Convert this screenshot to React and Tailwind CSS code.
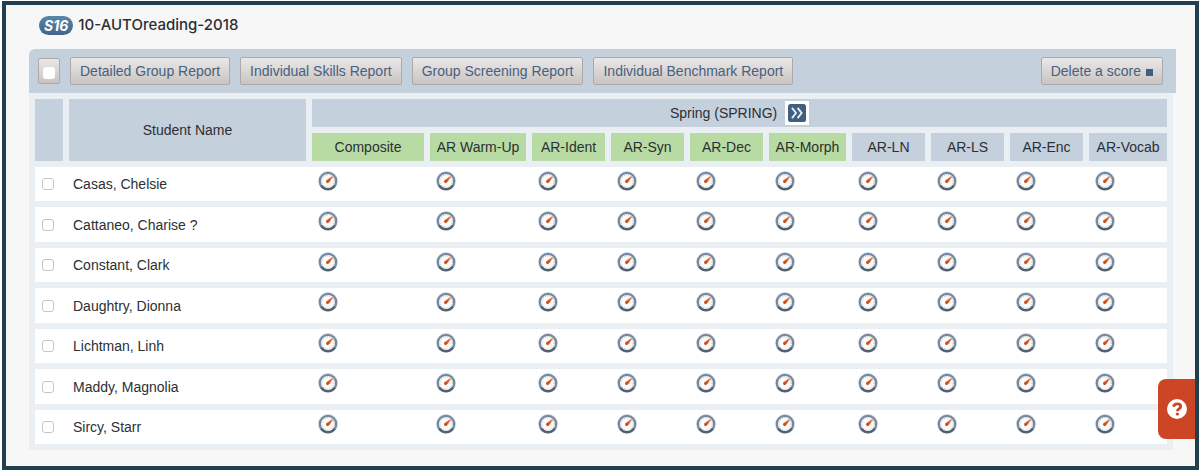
import clsx from "clsx";

const students = [
  "Casas, Chelsie",
  "Cattaneo, Charise ?",
  "Constant, Clark",
  "Daughtry, Dionna",
  "Lichtman, Linh",
  "Maddy, Magnolia",
  "Sircy, Starr",
];

const measures = [
  { name: "Composite", green: true },
  { name: "AR Warm-Up", green: true },
  { name: "AR-Ident", green: true },
  { name: "AR-Syn", green: true },
  { name: "AR-Dec", green: true },
  { name: "AR-Morph", green: true },
  { name: "AR-LN" },
  { name: "AR-LS" },
  { name: "AR-Enc" },
  { name: "AR-Vocab" },
];

const reports = [
  "Detailed Group Report",
  "Individual Skills Report",
  "Group Screening Report",
  "Individual Benchmark Report",
];

function Checkbox({ label, className }) {
  return (
    <input
      type="checkbox"
      aria-label={label}
      className={clsx("block size-3 appearance-none rounded-[3px] bg-white checked:bg-[#44658a]", className)}
    />
  );
}

function ToolbarButton({ children }) {
  return (
    <button
      type="button"
      className="h-7 whitespace-nowrap rounded-xs border border-[#aaa9ab] bg-linear-to-b from-[#eae8e7] to-[#c9c4c2] px-[9px] text-sm text-[#48607f]"
    >
      {children}
    </button>
  );
}

function Gauge() {
  return (
    <svg viewBox="0 0 20 20" className="block size-5" aria-hidden="true">
      <circle cx="10" cy="10" r="10" fill="#d3dfe9" />
      <circle cx="10" cy="10" r="8.2" fill="#fdfbf8" stroke="#7489a0" strokeWidth="2.2" />
      <path d="M3.2 14.6A8.2 8.2 0 0 0 16.8 14.6" fill="none" stroke="#52606e" strokeWidth="2.2" />
      <circle cx="10" cy="10" r="6.2" fill="none" stroke="#bcc3c9" strokeWidth="1.2" strokeDasharray="0.9 1.4" />
      <path d="M8.2 9.2 14.8 4.6 15 6.2 12 10.6 9 12.4Z" fill="#eba583" />
      <path d="M8.6 9.4 14 5.8 11.6 10.4 9 12Z" fill="#d4592a" />
      <circle cx="9.6" cy="10.6" r="1.4" fill="#c9481f" />
    </svg>
  );
}

export default function App() {
  return (
    <div className="flex min-h-screen bg-white pl-0.5 pr-px pt-px font-['Liberation_Sans',Arial,sans-serif] text-[#2c2f33]">
      <main className="relative min-w-0 flex-1 border-4 border-[#213f4e] bg-[#f7f7f7] pb-4 pl-[23px] pr-[19px]">
        {/* Group title */}
        <div className="flex h-11 items-center gap-[5px] pb-1 pl-[10px] font-['Inter',sans-serif]">
          <span className="rounded-full bg-linear-to-b from-[#5587ab] to-[#42648a] px-[5px] text-sm font-bold italic leading-[19px] text-white">
            S16
          </span>
          <h1 className="text-[15px] font-medium">10-AUTOreading-2018</h1>
        </div>

        {/* Toolbar */}
        <div className="flex h-11 items-center gap-[10px] rounded-tl-md bg-[#c5d0dd] pl-[9px] pr-[13px]">
          <label className="flex h-[26px] w-[22px] items-end justify-center rounded-xs border border-[#aaa9ab] bg-linear-to-b from-[#eae8e7] to-[#c9c4c2] pb-1">
            <Checkbox label="Select all students" />
          </label>
          {reports.map((report) => (
            <ToolbarButton key={report}>{report}</ToolbarButton>
          ))}
          <div className="ml-auto">
            <ToolbarButton>
              <span className="flex items-center gap-[5px]">
                Delete a score
                <span className="mt-0.5 size-[7px] bg-[#3f5f80]" />
              </span>
            </ToolbarButton>
          </div>
        </div>

        {/* Scores */}
        <div className="mr-[3px] bg-[#e9eff2] px-[6px]">
          <table className="w-full table-fixed border-separate border-spacing-x-0 border-spacing-y-[6px] text-sm">
            <colgroup>
              <col className="w-[34px]" />
              <col className="w-[243px]" />
              <col className="w-[118px]" />
              <col className="w-[102px]" />
              <col className="w-[79px]" />
              <col className="w-[79px]" />
              <col className="w-[79px]" />
              <col className="w-[83px]" />
              <col className="w-[79px]" />
              <col className="w-[79px]" />
              <col className="w-[79px]" />
              <col className="w-[78px]" />
            </colgroup>
            <thead>
              <tr className="h-7">
                <td rowSpan={2} className="border-r-[6px] border-[#e9eff2] bg-[#c5d0dd]" />
                <th rowSpan={2} className="border-r-[6px] border-[#e9eff2] bg-[#c5d0dd] font-normal">
                  Student Name
                </th>
                <th colSpan={measures.length} className="bg-[#c5d0dd] font-normal">
                  <div className="flex items-center justify-center gap-2">
                    Spring (SPRING)
                    <button type="button" aria-label="Show more" className="bg-white p-[3px]">
                      <svg viewBox="0 0 18 18" className="block size-[18px]" aria-hidden="true">
                        <rect width="18" height="18" rx="2.5" fill="#3f5f80" />
                        <path
                          d="M4 3.8 8 9 4 14.2M9.6 3.8 13.6 9 9.6 14.2"
                          fill="none"
                          stroke="#e6eef5"
                          strokeWidth="1.9"
                        />
                      </svg>
                    </button>
                  </div>
                </th>
              </tr>
              <tr className="h-7">
                {measures.map((m) => (
                  <th
                    key={m.name}
                    className={clsx(
                      "whitespace-nowrap border-r-[6px] border-[#e9eff2] font-normal last:border-r-0",
                      m.green ? "bg-[#b7dba3]" : "bg-[#c5d0dd]"
                    )}
                  >
                    {m.name}
                  </th>
                ))}
              </tr>
            </thead>
            <tbody>
              {students.map((student) => (
                <tr key={student} className="odd:h-[34px] even:h-[35px]">
                  <td className="bg-white pl-[7px]">
                    <Checkbox label={student} className="border border-[#c6c6c6]" />
                  </td>
                  <td className="bg-white pl-1">{student}</td>
                  {measures.map((m) => (
                    <td key={m.name} className="bg-white pl-[6px] pt-1 align-top">
                      <Gauge />
                    </td>
                  ))}
                </tr>
              ))}
            </tbody>
          </table>
        </div>

        {/* Help tab */}
        <button
          type="button"
          aria-label="Help"
          className="absolute bottom-[27px] right-0 flex h-[60px] w-[37px] items-center justify-center rounded-l-lg bg-[#cc4524]"
        >
          <svg viewBox="0 0 20 20" className="size-5" aria-hidden="true">
            <circle cx="10" cy="10" r="10" fill="#fff" />
            <path
              d="M6.5 7.8C7 5.7 8.4 4.9 10.2 4.9 12.2 4.9 13.7 6 13.7 7.7 13.7 9.8 10.4 9.7 10.4 12.2"
              fill="none"
              stroke="#cc4524"
              strokeWidth="2.8"
            />
            <circle cx="10.4" cy="15" r="1.6" fill="#cc4524" />
          </svg>
        </button>
      </main>
    </div>
  );
}
